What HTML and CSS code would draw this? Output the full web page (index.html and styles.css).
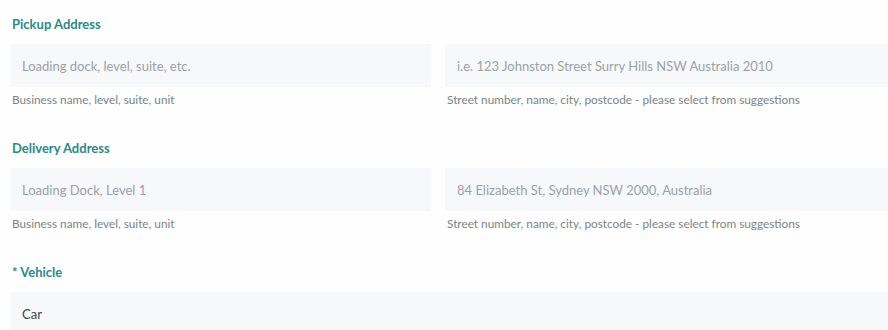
FILE: index.html
```html
<!DOCTYPE html>
<html>
<head>
<meta charset="utf-8">
<link rel="stylesheet" href="styles.css">
</head>
<body>
<form class="form">
  <section class="section">
    <div class="label">Pickup Address</div>
    <div class="row">
      <div class="field">
        <input class="input" type="text" placeholder="Loading dock, level, suite, etc.">
        <div class="help">Business name, level, suite, unit</div>
      </div>
      <div class="field">
        <input class="input" type="text" placeholder="i.e. 123 Johnston Street Surry Hills NSW Australia 2010">
        <div class="help">Street number, name, city, postcode - please select from suggestions</div>
      </div>
    </div>
  </section>
  <section class="section">
    <div class="label">Delivery Address</div>
    <div class="row">
      <div class="field">
        <input class="input" type="text" placeholder="Loading Dock, Level 1">
        <div class="help">Business name, level, suite, unit</div>
      </div>
      <div class="field">
        <input class="input" type="text" placeholder="84 Elizabeth St, Sydney NSW 2000, Australia">
        <div class="help">Street number, name, city, postcode - please select from suggestions</div>
      </div>
    </div>
  </section>
  <section class="section">
    <div class="label">* Vehicle</div>
    <div class="select">Car</div>
  </section>
</form>
</body>
</html>
```
FILE: styles.css
```css
html, body {
  margin: 0;
  padding: 0;
  background: #fefefe;
  overflow: hidden;
}
body {
  font-family: Lato, "Open Sans", sans-serif;
}
.form {
  padding: 16px 0 0 10px;
}
.section {
  margin-bottom: 33px;
}
.section:last-child {
  margin-bottom: 0;
}
.label {
  font-size: 13px;
  font-weight: 700;
  line-height: 16px;
  color: #2a8a8b;
  padding-left: 2px;
  margin-bottom: 12px;
}
.row {
  display: grid;
  grid-template-columns: 421px 1fr;
  column-gap: 14px;
}
.field {
  display: flex;
  flex-direction: column;
}
.input, .select {
  box-sizing: border-box;
  height: 43px;
  border: none;
  outline: none;
  background: #f7f8fa;
  font-family: Lato, "Open Sans", sans-serif;
  font-size: 13px;
  padding: 0 12px;
  margin: 0;
  width: 100%;
}
.input::placeholder {
  color: #9ba3a5;
}
.help {
  font-size: 11.8px;
  line-height: 14px;
  color: #7a8586;
  margin-top: 6px;
  padding-left: 2px;
}
.select {
  display: flex;
  align-items: center;
  color: #3a4646;
}
```
